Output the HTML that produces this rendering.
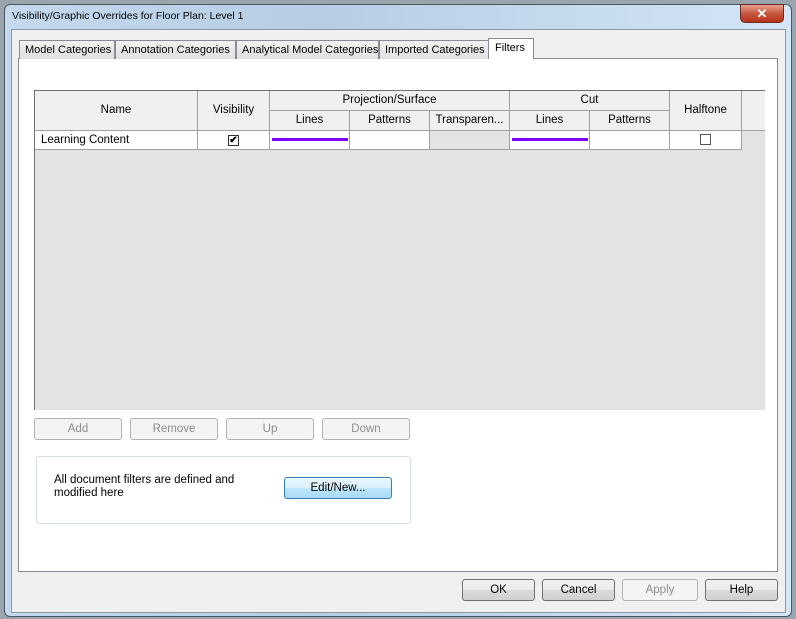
<!DOCTYPE html><html><head><style>
body{margin:0;width:796px;height:619px;background:#fff;position:relative;overflow:hidden;font-family:"Liberation Sans",sans-serif;font-size:11.5px;color:#000}
.a{position:absolute;box-sizing:border-box;white-space:nowrap}
.btn{position:absolute;box-sizing:border-box;border:1px solid #707070;border-radius:3px;background:linear-gradient(#f2f2f2,#ebebeb 50%,#dcdcdc 51%,#cfcfcf);text-align:center;line-height:21px;font-size:11.5px;white-space:nowrap}
.dis{border-color:#adb2b5;background:#f4f4f4;color:#8d8d8d}
.c{position:absolute;box-sizing:border-box;border-right:1px solid #a0a0a0;border-bottom:1px solid #a0a0a0;text-align:center;background:#f0f0f0;white-space:nowrap;overflow:hidden}
.tab{position:absolute;box-sizing:border-box;top:40px;height:19px;border:1px solid #898c95;border-bottom:none;background:linear-gradient(#f2f2f2,#e0e0e0);line-height:19px;padding-left:5px;font-size:11px;white-space:nowrap;overflow:hidden}
</style></head><body>
<div class="a" style="left:0;top:0;width:796px;height:619px;background:#9aa4ad"></div>
<div class="a" style="left:4px;top:4px;width:788px;height:613px;border:1px solid #4a5866;border-radius:6px;background:linear-gradient(90deg,#c4d9ee,#b6cde3 40%,#d4e6f7)"></div>
<div class="a" style="left:12px;top:10px;font-size:10.5px;color:#000">Visibility/Graphic Overrides for Floor Plan: Level 1</div>
<div class="a" style="left:740px;top:4px;width:44px;height:19px;border:1px solid #6b2a22;border-radius:0 0 5px 5px;background:linear-gradient(#e8a492,#c7573f 50%,#b8321b);color:#fff;text-align:center;font-weight:bold;line-height:17px;font-size:13px">✕</div>
<div class="a" style="left:11px;top:29px;width:775px;height:584px;background:#f0f0f0;border:1px solid #8a98a6"></div>
<div class="a" style="left:18px;top:58px;width:760px;height:514px;background:#fff;border:1px solid #898c95"></div>
<div class="tab" style="left:19px;width:96px">Model Categories</div>
<div class="tab" style="left:115px;width:121px">Annotation Categories</div>
<div class="tab" style="left:236px;width:143px">Analytical Model Categories</div>
<div class="tab" style="left:379px;width:110px">Imported Categories</div>
<div class="tab" style="left:488px;top:38px;height:21px;width:46px;background:#fff;padding-left:6px">Filters</div>
<div class="a" style="left:34px;top:90px;width:731px;height:320px;background:#e3e3e3;border-left:1px solid #707070;border-top:1px solid #707070"></div>
<div class="c" style="left:35px;top:91px;width:163px;height:40px;line-height:39px">Name</div>
<div class="c" style="left:198px;top:91px;width:72px;height:40px;line-height:39px">Visibility</div>
<div class="c" style="left:270px;top:91px;width:240px;height:20px;line-height:19px">Projection/Surface</div>
<div class="c" style="left:510px;top:91px;width:160px;height:20px;line-height:19px">Cut</div>
<div class="c" style="left:270px;top:111px;width:80px;height:20px;line-height:19px">Lines</div>
<div class="c" style="left:350px;top:111px;width:80px;height:20px;line-height:19px">Patterns</div>
<div class="c" style="left:430px;top:111px;width:80px;height:20px;line-height:19px">Transparen...</div>
<div class="c" style="left:510px;top:111px;width:80px;height:20px;line-height:19px">Lines</div>
<div class="c" style="left:590px;top:111px;width:80px;height:20px;line-height:19px">Patterns</div>
<div class="c" style="left:670px;top:91px;width:72px;height:40px;line-height:39px">Halftone</div>
<div class="c" style="left:742px;top:91px;width:23px;height:40px;border-right:none"></div>
<div class="c" style="left:35px;top:131px;width:163px;height:19px;background:#fff;text-align:left;padding-left:6px;line-height:19px">Learning Content</div>
<div class="c" style="left:198px;top:131px;width:72px;height:19px;background:#fff"><div class="a" style="left:30px;top:4px;width:11px;height:11px;border:1px solid #333;font-size:10px;line-height:9px;font-weight:bold">✔</div></div>
<div class="c" style="left:270px;top:131px;width:80px;height:19px;background:#fff"><div class="a" style="left:2px;top:7px;width:76px;height:3px;background:#8000ff"></div></div>
<div class="c" style="left:350px;top:131px;width:80px;height:19px;background:#fff"></div>
<div class="c" style="left:430px;top:131px;width:80px;height:19px;background:#e3e3e3"></div>
<div class="c" style="left:510px;top:131px;width:80px;height:19px;background:#fff"><div class="a" style="left:2px;top:7px;width:76px;height:3px;background:#8000ff"></div></div>
<div class="c" style="left:590px;top:131px;width:80px;height:19px;background:#fff"></div>
<div class="c" style="left:670px;top:131px;width:72px;height:19px;background:#fff"><div class="a" style="left:30px;top:3px;width:11px;height:11px;border:1px solid #555"></div></div>
<div class="btn dis" style="left:34px;top:418px;width:88px;height:22px">Add</div>
<div class="btn dis" style="left:130px;top:418px;width:88px;height:22px">Remove</div>
<div class="btn dis" style="left:226px;top:418px;width:88px;height:22px">Up</div>
<div class="btn dis" style="left:322px;top:418px;width:88px;height:22px">Down</div>
<div class="a" style="left:36px;top:456px;width:375px;height:68px;border:1px solid #d5dfe5;border-radius:3px"></div>
<div class="a" style="left:54px;top:474px;line-height:13px">All document filters are defined and<br>modified here</div>
<div class="btn" style="left:284px;top:477px;width:108px;height:22px;border-color:#3c7fb1;background:linear-gradient(#eaf6fd,#d9f0fc 50%,#bee6fd 51%,#a7d9f5)">Edit/New...</div>
<div class="btn" style="left:462px;top:579px;width:73px;height:22px">OK</div>
<div class="btn" style="left:542px;top:579px;width:73px;height:22px">Cancel</div>
<div class="btn dis" style="left:622px;top:579px;width:76px;height:22px">Apply</div>
<div class="btn" style="left:705px;top:579px;width:73px;height:22px">Help</div>
</body></html>
